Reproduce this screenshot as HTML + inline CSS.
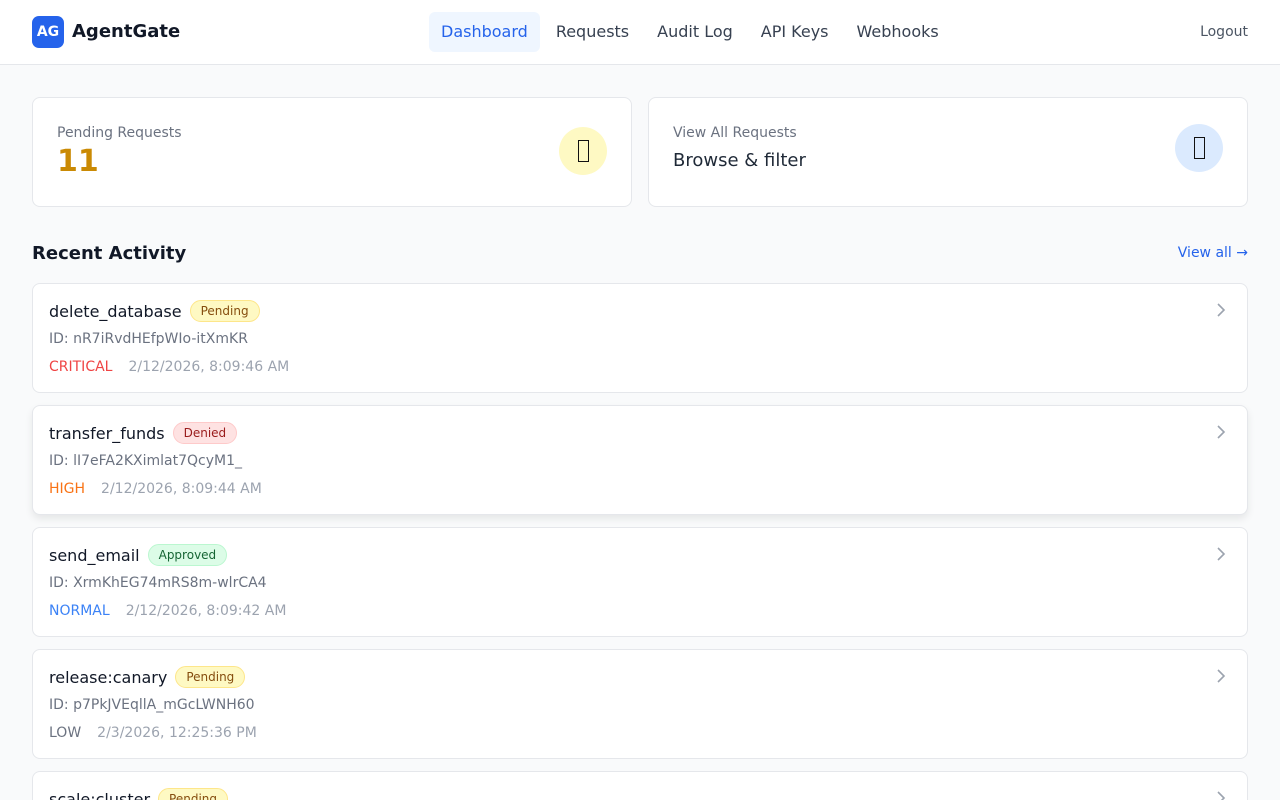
<!DOCTYPE html>
<html style="overflow:hidden;height:800px"><head><meta charset="utf-8"><style>
*{box-sizing:border-box;margin:0;padding:0}
body{width:1280px;height:800px;overflow:hidden;position:relative;background:#f9fafb;font-family:"DejaVu Sans","Liberation Sans",sans-serif;color:#111827}
header{height:65px;background:#fff;border-bottom:1px solid #e5e7eb;position:relative}
.logo{position:absolute;left:32px;top:16px;width:32px;height:32px;border-radius:7px;background:#2563eb;color:#fff;font-weight:bold;font-size:14px;line-height:32px;text-align:center}
.brand{position:absolute;left:72px;top:21px;font-size:18px;font-weight:bold;color:#111827}
nav{position:absolute;left:429px;top:12px;display:flex;gap:4px}
nav a{font-size:16px;color:#374151;padding:0 12px;height:40px;line-height:40px;border-radius:6px;text-decoration:none}
nav a.act{background:#eff6ff;color:#2563eb}
.logout{position:absolute;right:32px;top:24px;font-size:14px;color:#4b5563}
.card{position:absolute;background:#fff;border:1px solid #e5e7eb;border-radius:8px;overflow:hidden}
.lbl{position:absolute;left:24px;top:27px;font-size:14px;color:#6b7280}
.circ{position:absolute;width:48px;height:48px;border-radius:50%;top:29px;right:24px}
.tofu{position:absolute;left:19px;top:13px;width:11px;height:22px;border:1.5px solid #111;}
h2{position:absolute;left:32px;top:243px;font-size:18px;font-weight:bold}
.va{position:absolute;right:32px;top:245px;font-size:14px;color:#2563eb}
.row{left:32px;width:1216px;height:110px}
.t{position:absolute;left:16px;top:16px;font-size:16px;color:#111827;display:flex;align-items:center;gap:8px}
.b{font-size:12px;padding:0 10px;height:22px;line-height:20px;border-radius:11px;border:1px solid}
.p{background:#fef9c3;color:#854d0e;border-color:#fde68a}
.d{background:#fee2e2;color:#991b1b;border-color:#fecaca}
.a{background:#dcfce7;color:#166534;border-color:#bbf7d0}
.id{position:absolute;left:16px;top:47px;font-size:14px;color:#6b7280}
.m{position:absolute;left:16px;top:75px;font-size:14px;color:#9ca3af}
.m span{margin-right:16px}
.chev{position:absolute;right:21px;top:17px}
</style></head><body>
<header>
<div class="logo">AG</div><div class="brand">AgentGate</div>
<nav><a class="act">Dashboard</a><a>Requests</a><a>Audit Log</a><a>API Keys</a><a>Webhooks</a></nav>
<div class="logout">Logout</div>
</header>
<div class="card" style="left:32px;top:97px;width:600px;height:110px">
<div class="lbl">Pending Requests</div>
<div style="position:absolute;left:24px;top:46px;font-size:30px;font-weight:bold;color:#ca8a04">11</div>
<div class="circ" style="background:#fef9c3;top:29px"><div class="tofu"></div></div>
</div>
<div class="card" style="left:648px;top:97px;width:600px;height:110px">
<div class="lbl">View All Requests</div>
<div style="position:absolute;left:24px;top:52px;font-size:18px;color:#1f2937">Browse &amp; filter</div>
<div class="circ" style="background:#dbeafe;top:26px"><div class="tofu"></div></div>
</div>
<h2>Recent Activity</h2><div class="va">View all →</div>

<div class="card row" style="top:283px">
<div class="t">delete_database <span class="b p">Pending</span></div>
<div class="id">ID: nR7iRvdHEfpWIo-itXmKR</div>
<div class="m"><span style="color:#ef4444">CRITICAL</span>2/12/2026, 8:09:46 AM</div>
<svg class="chev" width="10" height="18" viewBox="0 0 10 18"><path d="M2 3l6 6-6 6" fill="none" stroke="#9ca3af" stroke-width="1.6"/></svg>
</div>
<div class="card row" style="top:405px;box-shadow:0 4px 8px rgba(0,0,0,.08);overflow:visible">
<div class="t">transfer_funds <span class="b d">Denied</span></div>
<div class="id">ID: lI7eFA2KXimlat7QcyM1_</div>
<div class="m"><span style="color:#f97316">HIGH</span>2/12/2026, 8:09:44 AM</div>
<svg class="chev" width="10" height="18" viewBox="0 0 10 18"><path d="M2 3l6 6-6 6" fill="none" stroke="#9ca3af" stroke-width="1.6"/></svg>
</div>
<div class="card row" style="top:527px">
<div class="t">send_email <span class="b a">Approved</span></div>
<div class="id">ID: XrmKhEG74mRS8m-wlrCA4</div>
<div class="m"><span style="color:#3b82f6">NORMAL</span>2/12/2026, 8:09:42 AM</div>
<svg class="chev" width="10" height="18" viewBox="0 0 10 18"><path d="M2 3l6 6-6 6" fill="none" stroke="#9ca3af" stroke-width="1.6"/></svg>
</div>
<div class="card row" style="top:649px">
<div class="t">release:canary <span class="b p">Pending</span></div>
<div class="id">ID: p7PkJVEqllA_mGcLWNH60</div>
<div class="m"><span style="color:#6b7280">LOW</span>2/3/2026, 12:25:36 PM</div>
<svg class="chev" width="10" height="18" viewBox="0 0 10 18"><path d="M2 3l6 6-6 6" fill="none" stroke="#9ca3af" stroke-width="1.6"/></svg>
</div>
<div class="card row" style="top:771px;height:29px;border-bottom:none;border-radius:8px 8px 0 0">
<div class="t">scale:cluster <span class="b p">Pending</span></div>
<svg class="chev" width="10" height="18" viewBox="0 0 10 18"><path d="M2 3l6 6-6 6" fill="none" stroke="#9ca3af" stroke-width="1.6"/></svg>
</div>
</body></html>
